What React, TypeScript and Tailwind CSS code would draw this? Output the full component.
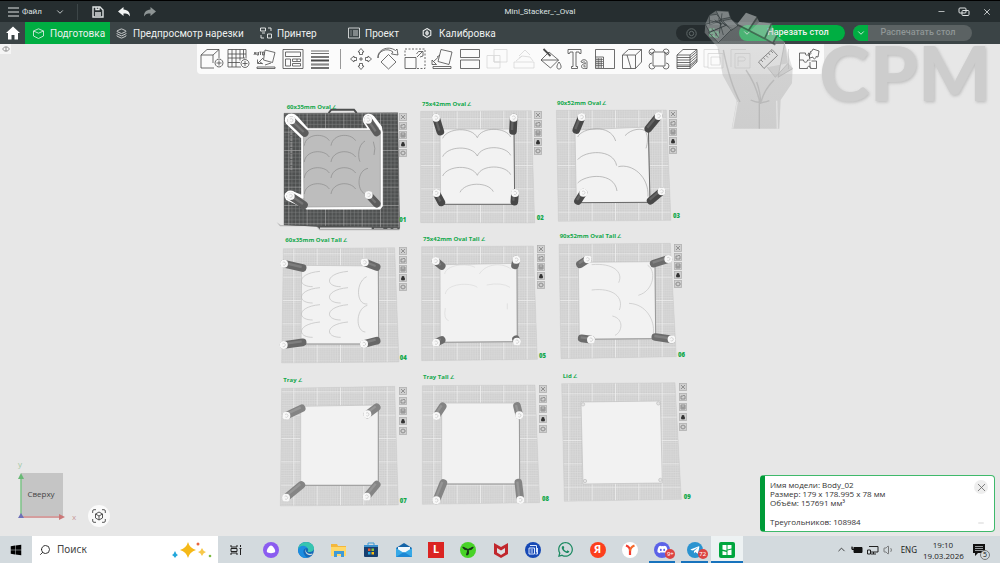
import React from "react";
import type { ReactNode } from "react";
import { ChevronDown, ChevronUp, X, Minus, Layers, Search, Volume1 } from "lucide-react";
import { FaWhatsapp, FaDiscord, FaTelegramPlane, FaWindows } from "react-icons/fa";

type Point = [number, number];

interface Plate {
  id: string;
  name: string;
  left: number;
  top: number;
  view: string;
  label: Point;
  number: Point;
  tools: Point;
  loose?: boolean;
  dark?: boolean;
  bed: string;
  body: string;
  arcs: string[];
  arcColor: string;
  pillars: [Point, Point][];
  pillarFill: string;
}

const plates: Plate[] = [
  {
    id: "01", name: "60x35mm Oval", left: 0, top: 51, view: "0 0 450 420",
    label: [50, 41], number: [388, 382], tools: [129, 18], dark: true,
    bed: "42,55 383,53 389,398 42,390",
    body: "100,106 331,106 331,334 102,336",
    arcs: [
      ...[122, 171, 219, 267].flatMap((y) => [
        `M103,${y + 30} C106,${y - 6} 162,${y - 10} 178,${y + 15}`,
        `M183,${y + 30} C188,${y - 6} 240,${y - 10} 257,${y + 15}`,
      ]),
      "M285,138 C262,150 264,190 270,200", "M294,220 C260,226 260,286 284,296", "M310,140 Q318,160 312,180",
    ],
    arcColor: "#8a8a8a",
    pillars: [[[104, 114], [64, 76]], [[320, 112], [294, 74]], [[102, 330], [62, 303]], [[320, 326], [296, 300]]],
    pillarFill: "#5c5c5c",
  },
  {
    id: "02", name: "75x42mm Oval", left: 140, top: 51, view: "0 0 450 420",
    label: [36, 34], number: [380, 376], tools: [124, 16],
    bed: "32,49 364,47 374,384 32,383",
    body: "90,102 312,102 314,328 92,328",
    arcs: [
      ...[104, 159, 217].flatMap((y) => [
        `M98,${y + 26} C112,${y - 6} 185,${y - 10} 202,${y + 24}`,
        `M202,${y + 24} C215,${y - 10} 288,${y - 8} 302,${y + 22}`,
      ]),
      "M150,292 C165,260 235,260 250,290",
    ],
    arcColor: "#a2a2a2",
    pillars: [[[91, 110], [78, 68]], [[309, 108], [311, 68]], [[94, 322], [79, 294]], [[313, 320], [315, 294]]],
    pillarFill: "#484848",
  },
  {
    id: "03", name: "90x52mm Oval", left: 275, top: 51, view: "0 0 450 420",
    label: [36, 30], number: [384, 370], tools: [124, 15],
    bed: "34,46 364,45 378,376 40,379",
    body: "90,105 310,96 315,322 94,323",
    arcs: [
      "M98,126 C110,98 196,84 212,138", "M98,194 C120,166 205,160 215,212", "M98,264 C122,238 208,230 216,288",
      "M240,122 C260,100 295,98 302,110 C310,125 308,145 303,160", "M220,215 C262,205 312,244 309,305",
    ],
    arcColor: "#a0a0a0",
    pillars: [[[94, 105], [110, 66]], [[310, 101], [341, 63]], [[99, 318], [115, 293]], [[317, 317], [350, 289]]],
    pillarFill: "#484848",
  },
  {
    id: "04", name: "60x35mm Oval Tall", left: 0, top: 186, view: "0 0 450 420",
    label: [46, 37], number: [389, 390], tools: [129, 17],
    bed: "40,56 374,53 387,396 35,399",
    body: "95,106 325,108 326,342 93,342",
    arcs: [
      ...[150, 199, 250, 302].flatMap((y) => [
        `M150,${y - 26} C80,${y - 20} 80,${y + 20} 128,${y + 20}`,
        `M234,${y - 26} C164,${y - 20} 164,${y + 20} 212,${y + 20}`,
      ]),
      "M290,140 C256,156 258,226 292,222", "M292,226 C256,236 256,304 286,306",
    ],
    arcColor: "#bcbcbc",
    pillars: [[[98, 114], [42, 101]], [[320, 111], [284, 97]], [[98, 337], [41, 345]], [[320, 332], [282, 342]]],
    pillarFill: "#686868",
  },
  {
    id: "05", name: "75x42mm Oval Tall", left: 140, top: 186, view: "420 0 450 420",
    label: [459, 32], number: [807, 384], tools: [127, 15],
    bed: "455,50 790,48 802,388 455,392",
    body: "510,104 741,100 742,335 511,337",
    arcs: ["M524,132 C528,104 590,98 615,112", "M628,132 C650,98 700,98 724,118", "M526,192 C530,160 600,156 622,172", "M650,165 Q695,156 720,172", "M526,234 Q520,268 536,272", "M712,220 v18"],
    arcColor: "#dadada",
    pillars: [[[515, 108], [497, 93]], [[735, 106], [739, 89]], [[515, 330], [498, 338]], [[738, 328], [741, 335]]],
    pillarFill: "#6a6a6a",
  },
  {
    id: "06", name: "90x52mm Oval Tall", left: 275, top: 186, view: "0 0 450 420",
    label: [44, 25], number: [399, 380], tools: [129, 14],
    bed: "42,43 376,40 394,380 48,386",
    body: "100,97 330,95 332,326 103,328",
    arcs: [
      "M140,104 C204,98 236,126 221,158", "M140,180 C204,172 238,202 223,240", "M202,258 C238,266 232,306 210,316",
      "M308,106 C334,120 328,182 280,196", "M252,220 C304,222 330,272 325,310",
    ],
    arcColor: "#c2c2c2",
    pillars: [[[105, 103], [128, 88]], [[326, 101], [370, 87]], [[110, 325], [138, 329]], [[331, 321], [380, 328]]],
    pillarFill: "#6c6c6c",
  },
  {
    id: "07", name: "Tray", left: 0, top: 324, view: "0 0 450 420",
    label: [40, 42], number: [389, 405], tools: [129, 19], loose: true,
    bed: "35,61 374,55 385,411 31,414",
    body: "92,115 325,111 325,352 92,352",
    arcs: [], arcColor: "#c8c8c8",
    pillars: [[[95, 121], [49, 143]], [[320, 118], [292, 139]], [[94, 351], [48, 389]], [[320, 350], [290, 386]]],
    pillarFill: "#848484",
  },
  {
    id: "08", name: "Tray Tall", left: 140, top: 324, view: "420 0 450 420",
    label: [459, 34], number: [816, 399], tools: [129, 17], loose: true,
    bed: "457,53 795,51 809,404 457,409",
    body: "515,105 748,105 749,348 515,348",
    arcs: [], arcColor: "#c8c8c8",
    pillars: [[[518, 115], [499, 144]], [[741, 114], [748, 142]], [[520, 345], [499, 397]], [[745, 344], [751, 396]]],
    pillarFill: "#848484",
  },
  {
    id: "09", name: "Lid", left: 275, top: 324, view: "0 414 450 420",
    label: [53, 444], number: [416, 808], tools: [134, 15], loose: true,
    bed: "50,461 390,458 409,808 58,814",
    body: "108,516 346,513 352,759 114,762",
    arcs: [], arcColor: "#c8c8c8", pillars: [], pillarFill: "#848484",
  },
];

function Pillar({ base, cap, fill }: { base: Point; cap: Point; fill: string }) {
  return (
    <g>
      <line x1={base[0]} y1={base[1]} x2={cap[0]} y2={cap[1]} stroke={fill} strokeWidth="23" strokeLinecap="round" />
      <line x1={base[0] - 3} y1={base[1] - 3} x2={cap[0] - 3} y2={cap[1] - 3} stroke="#fff" strokeOpacity=".15" strokeWidth="7" />
      <circle cx={cap[0]} cy={cap[1]} r="12" fill="#f8f8f8" />
      <path d={`M${cap[0] - 4},${cap[1] - 3} a5,5 0 1 1 1,7`} fill="none" stroke="#c2c2c2" strokeWidth="2" />
    </g>
  );
}

const plateTools: { label: string; icon: ReactNode }[] = [
  { label: "Удалить стол", icon: <path d="M2 2l4 4M6 2L2 6" /> },
  { label: "Повернуть модели", icon: <path d="M2 6V3h2l1-1 1 1v3z" /> },
  { label: "Расставить модели", icon: <path d="M2 2h4v4H2zM2 4h4M4 4v2" /> },
  { label: "Заблокировать стол", icon: <path d="M2.500 4h3v2h-3zM3 4V2.500h2V4" fill="#333" stroke="#333" /> },
  { label: "Настройки стола", icon: <path d="M4 2l2 1v2L4 6 2 5V3z" /> },
];

function PlateView({ plate }: { plate: Plate }) {
  const grid = plate.dark ? "url(#grid-dark)" : "url(#grid-light)";
  return (
    <section className="absolute h-[140px] w-[150px]" style={{ left: plate.left, top: plate.top }} aria-label={plate.name}>
      <svg className="block h-full w-full overflow-visible" viewBox={plate.view}>
        {plate.dark && (
          <g>
            <path d="M176,54 l8,-10 h68 l8,10" fill="none" stroke="#4c4e4e" strokeWidth="6" />
            <path d="M20,382 l12,8 h106 l8,10 H388 v6 H148 l-10,-12 H30" fill="#b9b9b9" />
            <path d="M42,389 L389,397 v6 H150 l-8,-8 Z" fill="#545656" />
            <path d="M150,400 h155" stroke="#dadada" strokeWidth="5" />
            <path d="M312,400 h28 M352,400 h10 M370,400 h12" stroke="#e8e8e8" strokeWidth="2" />
          </g>
        )}
        <polygon points={plate.bed} fill={plate.dark ? "#4d4f4f" : "#cbcbcb"} />
        <polygon points={plate.bed} fill={grid} stroke={plate.dark ? "#3f4141" : "#c6c6c6"} strokeWidth="1" />
        {plate.dark && <path d="M64,105 v120" stroke="#999" strokeWidth="6" strokeDasharray="5 2 8 3" opacity=".7" />}
        {plate.dark && (
          <path
            d="M98,128 L52,84 Q44,68 58,61 Q68,57 78,66 L112,104 H300 L284,80 Q280,64 294,61 Q302,60 308,66 L331,96 L334,112 V332 L328,339 H110 L52,312 Q43,300 54,293 Q64,288 74,296 L98,306 Z"
            fill="#bdbdbd" stroke="#fff" strokeWidth="9" strokeLinejoin="round"
          />
        )}
        <polygon points={plate.body} fill={plate.dark ? "#bdbdbd" : "#f2f2f2"} stroke={plate.dark ? "#9b9b9b" : "#c0c0c0"} strokeWidth="2" />
        {!plate.dark && plate.id !== "09" && (
          <polyline points={plate.body.split(" ").slice(1).join(" ")} fill="none" stroke={plate.id < "04" ? "#6a6a6a" : "#9a9a9a"} strokeWidth="3" />
        )}
        {plate.arcs.map((d) => (
          <path key={d} d={d} fill="none" stroke={plate.arcColor} strokeWidth="2" />
        ))}
        {plate.id === "09" &&
          [[114, 523], [340, 520], [120, 753], [346, 750]].map(([x, y]) => (
            <circle key={`${x}-${y}`} cx={x} cy={y} r="5" fill="#e4e4e4" stroke="#bcbcbc" strokeWidth="2" />
          ))}
        {plate.pillars.map(([base, cap]) => (
          <Pillar key={cap.join()} base={base} cap={cap} fill={plate.pillarFill} />
        ))}
        <text x={plate.label[0]} y={plate.label[1]} className="fill-[#12a84b] font-['Open_Sans',sans-serif] text-[18px] font-bold">
          {plate.name}
          <tspan className="text-[16px]" dx="3">∠</tspan>
        </text>
        <text x={plate.number[0]} y={plate.number[1]} className="fill-[#12a84b] font-['Open_Sans',sans-serif] text-[18px] font-extrabold">
          {plate.id}
        </text>
      </svg>
      <div className={`absolute flex flex-col ${plate.loose ? "gap-0.5" : "gap-px"}`} style={{ left: plate.tools[0], top: plate.tools[1] }}>
        {plateTools.map((t) => (
          <button key={t.label} aria-label={t.label} className="block size-2 bg-[#cfcfcf]">
            <svg viewBox="0 0 8 8" className="block size-2" fill="none" stroke="#777" strokeWidth=".7">
              <rect x=".5" y=".5" width="7" height="7" stroke="#b0b0b0" />
              {t.icon}
            </svg>
          </button>
        ))}
      </div>
    </section>
  );
}

interface Tool {
  label: string;
  icon: ReactNode;
  off?: boolean;
}

const addTools: Tool[] = [
  { label: "Добавить модель", icon: <path d="M1 7h12M1 7v13h13M1 7l6-5.500h12L13 7v8M19 1.500V10M19 11a4 4 0 1 0 .01 0M19 12.500v5M16.500 15h5" /> },
  { label: "Добавить стол", icon: <path d="M1 1.500h18v9M1 1.500V19h13M5 1.500V19M9 1.500V19M13 1.500v11M16.500 1.500V10M1 6h18M1 10h17M1 14.500h12M18 11.500a4 4 0 1 0 .01 0M18 13v5M15.500 15.500h5" /> },
  { label: "Автоориентация", icon: <><path d="M11 2l10 2.500-2.500 10-9-2.500zM3 20.500h18v-1.500H3zM9 10l-5 5M3.500 11.500v4h4.500M6 14l3 2M17 15l-6 2" /><path d="M0 7l1-3 1 3M3 4v3h1.500V4M5.500 4h2M6.500 4v3M8.500 4h1.500v3H8.500z" /></> },
  { label: "Расставить", icon: <path d="M1 1.500h20v19H1zM3.500 4h15v4.500h-15zM3.500 11h5v7h-5zM10.500 11h8v2.500h-8zM10.500 15.500h8V18h-8zM15 11v2" /> },
  { label: "Слои", icon: <><path d="M2 3h18M2 5.500h18" /><path d="M2 9h18" strokeWidth="1.500" /><path d="M2 12.500h18" strokeWidth="2" /><path d="M2 16h18M2 17h18M2 19.500h18M2 20.500h18" /></> },
];

const editTools: Tool[] = [
  { label: "Переместить", icon: <path d="M11 .5l3 3.500h-1.500v2.500h-3V4H8zM11 21.500l3-3.500h-1.500v-2.500h-3V18H8zM.5 11L4 8v1.500h2.500v3H4V14zM21.500 11L18 8v1.500h-2.500v3H18V14zM10 10h2v2h-2z" /> },
  { label: "Повернуть", icon: <path d="M11.500 6.500l7.500 7.500-7.500 7L4 14zM1 10C1 3 10-1 16 4l-1.500 2 6.500 1-1-6-1.500 1.500C11-3 0 2 1 10z" /> },
  { label: "Масштаб", icon: <><path d="M1 9.500h11v11H1zM13 9l5-5M14.500 3.500H19V8M14.500 3.500l-2 2.500M19 8l-3 1" /><path d="M1 8V1h20v19.500h-8" strokeDasharray="2 1.500" /></> },
  { label: "Положить на грань", icon: <path d="M10 1.500l11 2.500-3 12.500L7 13.500zM2 18.500h18v2H2zM7.500 9l-5 4.500M1 12v4.500h4.500zM9 7L6 9" /> },
  { label: "Разрезать", icon: <path d="M1.500 1.500h19v8h-19zM1.500 12h19v8.500h-19z" /> },
  { label: "Булевы операции", off: true, icon: <path d="M1 7.500h13v12.500H1zM8 1.500h13V14H8zM8 7.500V14h6" /> },
  { label: "Упростить", off: true, icon: <path d="M1 14h20v6H1zM3 13l6-5 8 1 3 4M6 8l6-6 5 5M9 8l-3 2" /> },
  { label: "Раскраска", icon: <><path d="M9 4l9.500 8-8 8L1 12zM1 12h17.500M19 14c3 4 2.500 7 0 7s-3-3 0-7z" /><path d="M3.500 1l7 7" strokeWidth="1.800" /></> },
  { label: "Текст", icon: <><path d="M1 1.500h13v4h-1.500l-.5-1.500H9v14.500h1.500v2h-6v-2H6V4H3l-.5 1.500H1z" /><path d="M14 14c0-3 6-3 6 0v6.500h-1.500V20c-4 2-6-3-1-4.500h1c0-2-2.500-2-2.500-1zM18.500 17c-2.500 0-2.500 2.500 0 1.500" /></> },
  { label: "Поддержки", icon: <><path d="M1.500 1.500h19v19h-11M1.500 1.500V9h8v11.500h-8V9" /><path d="M3 10v10M4.500 10v10M6 10v10M7.500 10v10M2 11.500h7M2 13.500h7M2 15.500h7M2 17.500h7" strokeWidth=".6" /></> },
  { label: "Шов", icon: <path d="M1.500 7h13v13.500h-13zM1.500 7l6-5.500h13L14.500 7M20.500 1.500V14l-6 6.500M6 7l4 13.500" /> },
  { label: "Уши", icon: <path d="M5 4h12v14H5zM4 7A3 3 0 1 1 7 3.500M18 7a3 3 0 1 0-3-3.500M4 15a3 3 0 1 0 3 3.500M18 15a3 3 0 1 1-3 3.500M2.500 4a1.500 1.500 0 1 0 3 0M16.500 4a1.500 1.500 0 1 0 3 0" /> },
  { label: "Высота слоёв", icon: <path d="M1 7h13v13.500H1zM1 7l6-5.500h14L14 7M21 1.500V14l-7 6.500M1 9.500h13l7-6M1 12h13l7-6M1 14.500h13l7-6M1 17h13l7-6M1 18.500h13l7-6" /> },
  { label: "Сборка", off: true, icon: <path d="M1 1.500h15v4M1 1.500V19h4M5 5.500h15V20H5zM8 9h9v8H8z" /> },
  { label: "Сборка с опорой", off: true, icon: <path d="M1 1.500h15M1 1.500V19M5 5.500h15V20H5zM8 18V9h5c3 0 3 4 0 4H8" /> },
  { label: "Измерить", icon: <path d="M1.500 14L15 1.500l5.500 6L7 20.500zM4 12l2 2M6.500 9.500l1.500 2M9 7.500l2 2M11.500 5l1.500 2M14 3l2 2" /> },
];

const assemblyTools: Tool[] = [
  { label: "Вид сборки", icon: <path d="M1.500 5h6c-1 3 3.500 3 3 0h1v6M1.500 5v15.500h8c-1-3 4-3 3 0h6V13h-5M1.500 12h4c0 3 4 3 4 0h3M12 4l2-1 1-2 6 2-1 6-2-.5c0 3-3 3-3 .500l-3 1-1.500-3c3 0 3-3 1.500-3M12 14v6" /> },
];

function ToolButtons({ tools }: { tools: Tool[] }) {
  return (
    <>
      {tools.map((t) => (
        <button key={t.label} aria-label={t.label} disabled={t.off} className="flex justify-center disabled:opacity-20">
          <svg viewBox="0 0 22 22" className="size-[22px] overflow-visible" fill="none" stroke="#4a4a4a" strokeWidth=".8" strokeLinejoin="round">
            {t.icon}
          </svg>
        </button>
      ))}
    </>
  );
}

function Toolbar() {
  return (
    <div className="relative flex justify-center pl-5">
      <div role="toolbar" aria-label="Инструменты" className="flex h-[30px] items-center rounded-b-sm bg-[#fbfbfb] px-px">
        <div className="grid w-[136px] grid-cols-5"><ToolButtons tools={addTools} /></div>
        <div className="flex w-[14px] justify-center"><span className="h-5 w-px bg-[#999]" /></div>
        <div className="grid w-[434px] grid-cols-16"><ToolButtons tools={editTools} /></div>
        <div className="flex w-[14px] justify-center"><span className="h-5 w-px bg-[#ddd]" /></div>
        <div className="grid w-[27px]"><ToolButtons tools={assemblyTools} /></div>
      </div>
    </div>
  );
}

function TitleBar() {
  return (
    <header className="flex h-[22px] items-center border-t border-black bg-[#262e30] font-['Roboto','Open_Sans',sans-serif] text-[8px] text-[#dfe3e3]">
      <div className="flex flex-1 items-center">
        <button className="ml-2 flex items-center gap-[3px]">
          <svg viewBox="0 0 11 10" className="h-[10px] w-[11px]" stroke="currentColor"><path d="M0 1h11M0 5h11M0 9h11" /></svg>
          Файл
        </button>
        <button aria-label="Ещё" className="ml-[13px]"><ChevronDown size={10} /></button>
        <span className="ml-3 h-4 w-px bg-[#3d4648]" />
        <button aria-label="Сохранить" className="ml-[14px]">
          <svg viewBox="0 0 12 12" className="size-3" fill="none" stroke="currentColor" strokeWidth="1.4"><path d="M1 1h7l3 3v7H1z" /><path d="M3 7h6M3 9h6M4 1v2.500h3V1" /></svg>
        </button>
        <button aria-label="Отменить" className="ml-[14px]">
          <svg viewBox="0 0 12 10" className="h-[10px] w-3" fill="#f1f3f3"><path d="M0 4.500L5.500 0v2.500C10 3 12 5 12 9.500 10.500 7 9 6.500 5.500 6.500V9z" /></svg>
        </button>
        <button aria-label="Повторить" className="ml-[14px]">
          <svg viewBox="0 0 12 10" className="h-[10px] w-3" fill="#8d9494"><path d="M12 4.500L6.500 0v2.500C2 3 0 5 0 9.500 1.500 7 3 6.500 6.500 6.500V9z" /></svg>
        </button>
      </div>
      <h1 className="pl-[88px]">Mini_Stacker_-_Oval</h1>
      <div className="flex flex-1 items-center justify-end gap-3 pr-2">
        <button aria-label="Свернуть"><Minus size={9} /></button>
        <button aria-label="Восстановить">
          <svg viewBox="0 0 12 10" className="h-[10px] w-3" fill="none" stroke="currentColor"><rect x="1" y="1" width="7" height="5" rx="1" /><rect x="4" y="3.500" width="7" height="5" rx="1" /></svg>
        </button>
        <button aria-label="Закрыть"><X size={10} /></button>
      </div>
    </header>
  );
}

function TabBar() {
  return (
    <nav className="flex h-[22px] items-stretch bg-[#3b4446] font-['Roboto','Open_Sans',sans-serif] text-[10px] text-[#eef0f0]">
      <button aria-label="Главная" className="flex w-[25px] items-center justify-center">
        <svg viewBox="0 0 14 14" className="size-[14px]" fill="white"><path d="M7 .5L0 7h2v6.500h3.500V9h3v4.500H12V7h2z" /></svg>
      </button>
      <button className="flex w-[85px] items-center gap-1.5 bg-[#00ae42] pl-2">
        <svg viewBox="0 0 11 11" className="size-[11px]" fill="none" stroke="currentColor" strokeWidth=".8"><path d="M.5 3L5.500.8l5 2.200v5l-5 2.500-5-2.500zM.5 3l5 2.200 5-2.200" /></svg>
        Подготовка
      </button>
      <button className="ml-1.5 flex w-[124px] shrink-0 items-center gap-1.5 whitespace-nowrap">
        <Layers size={11} strokeWidth={1.700} className="shrink-0" />
        Предпросмотр нарезки
      </button>
      <button className="ml-5 flex w-[60px] items-center gap-[5px]">
        <svg viewBox="0 0 12 12" className="size-3" fill="none" stroke="currentColor" strokeWidth=".9"><path d="M.5 1h5v3h-5zM2 6h3M8 1h3v3M7.500 7h4v4h-4zM1 8v3h3" /></svg>
        Принтер
      </button>
      <button className="ml-7 flex w-[60px] items-center gap-[5px]">
        <svg viewBox="0 0 12 12" className="size-3" fill="none" stroke="currentColor" strokeWidth=".8"><path d="M.5 1h11v10H.5zM2.500 4h1M5 4h5M2.500 6h1M5 6h5M2.500 8h1M5 8h5" /></svg>
        Проект
      </button>
      <button className="ml-[14px] flex items-center gap-[7px]">
        <svg viewBox="0 0 10 10" className="size-[10px]" fill="none" stroke="currentColor" strokeWidth="1.100"><path d="M5 .6l3.800 2.200v4.400L5 9.400 1.200 7.200V2.800z" /><circle cx="5" cy="5" r="1.300" /><path d="M5 2.500v5" /></svg>
        Калибровка
      </button>
      <div className="ml-auto flex items-center gap-2 pr-7">
        <div className="flex h-4 items-center rounded-full bg-[#262d2f]">
          <button aria-label="Параметры" className="flex w-[30px] justify-center">
            <svg viewBox="0 0 10 10" className="size-[11px]" fill="none" stroke="#5f6868" strokeWidth=".9"><circle cx="5" cy="5" r="4.300" /><circle cx="5" cy="5" r="2" /></svg>
          </button>
          <button aria-label="Все столы" className="flex w-[15px] justify-center">
            <svg viewBox="0 0 10 10" className="size-[10px]" fill="none" stroke="#3ec871" strokeWidth="1.200"><path d="M1 1h4v7H1zM5 4h4v5H5zM3 3v3" /></svg>
          </button>
          <div className="ml-[18px] flex h-4 w-[106px] items-center rounded-full bg-[#00ae42]">
            <button aria-label="Режим нарезки" className="flex w-4 justify-center"><ChevronDown size={10} /></button>
            <button className="flex-1 whitespace-nowrap pr-1 text-[9px] font-medium">Нарезать стол</button>
          </div>
        </div>
        <div className="flex h-4 w-[119px] items-center overflow-hidden rounded-full bg-[#5b6263]">
          <button aria-label="Режим печати" className="flex h-4 w-[15px] items-center justify-center bg-[#00ae42]"><ChevronDown size={10} /></button>
          <button disabled className="flex-1 whitespace-nowrap pr-1 text-[9px] font-medium text-[#8f9696]">Распечатать стол</button>
        </div>
      </div>
    </nav>
  );
}

function Watermark() {
  return (
    <svg viewBox="0 0 1020 420" className="pointer-events-none absolute right-0 top-0 h-[140px] w-[340px]" aria-hidden="true">
      <defs>
        <linearGradient id="fist" x1="0" y1="0" x2="0" y2="1">
          <stop offset="0" stopColor="#b0b6b6" stopOpacity=".45" />
          <stop offset=".25" stopColor="#b8bcbc" stopOpacity=".4" />
          <stop offset=".35" stopColor="#b4b4b4" stopOpacity=".4" />
          <stop offset="1" stopColor="#b4b4b4" stopOpacity=".5" />
        </linearGradient>
        <filter id="soft"><feDropShadow dx="3" dy="4" stdDeviation="4" floodColor="#888" floodOpacity=".45" /></filter>
      </defs>
      <path d="M168,32 L205,34 L213,58 L232,72 L258,38 L290,50 L298,66 L334,70 L348,106 L374,126 L384,190 L398,204 L396,250 L362,300 L358,386 L215,386 L230,302 L188,226 L172,140 L134,98 L136,72 L148,46 Z" fill="url(#fist)" />
      <g fill="#c5c9c9" fillOpacity=".25" stroke="#2c3436" strokeOpacity=".6" strokeWidth="3">
        <path d="M168,32 l38,2 5,18 -30,6 z" />
        <path d="M148,46 l22,-3 14,18 -35,14 z" />
        <path d="M136,73 l45,-12 16,16 -48,20 z" />
        <path d="M146,98 l52,-22 19,10 -42,42 z" />
        <path d="M188,62 l26,-5 20,20 -20,14 z" />
        <path d="M164,60 l22,14 M176,55 l14,50 M156,85 l20,28 M150,62 l50,12 M186,40 l-8,60" fill="none" />
      </g>
      <g fill="#d5d9d9" fillOpacity=".25">
        <path d="M258,38 l32,12 -24,38 -34,-17 z" />
        <path d="M298,66 l36,5 -22,46 -42,-24 z" />
        <path d="M334,84 l16,24 -12,24 -25,-14 z" />
      </g>
      <path d="M232,74 L264,90 L318,118 L346,134 M292,52 L266,90 M334,72 L314,116 M350,108 L338,130" fill="none" stroke="#26302c" strokeOpacity=".55" strokeWidth="5" />
      <path d="M384,190 L346,232 L322,202 M374,128 L354,232 L398,206" fill="#aaa" fillOpacity=".3" stroke="#b0b0b0" strokeWidth="2" />
      <path d="M190,150 Q210,250 240,306 M258,210 Q286,250 298,300 V386 M342,240 Q312,270 304,304 M272,300 Q300,314 328,302 M290,246 Q302,280 302,312" fill="none" stroke="#a4a4a4" strokeOpacity=".5" strokeWidth="4" />
      <path d="M232,306 L218,386 M350,302 L352,386" stroke="#e2e2e2" strokeWidth="4" />
      <text x="478" y="304" className="fill-[#cdcdcd] font-['Lato',sans-serif] text-[230px] font-black" filter="url(#soft)">CPM</text>
    </svg>
  );
}

function ViewCube() {
  return (
    <div className="absolute bottom-2 left-3 flex items-end gap-2">
      <svg viewBox="0 0 68 68" className="h-[68px] w-[68px] overflow-visible">
        <rect x="9" y="13" width="42" height="43" fill="#c5c5c5" />
        <path d="M9 56V18" stroke="#7dc387" strokeWidth="1.500" />
        <path d="M6 19l3-6 3 6z" fill="#68b975" />
        <path d="M9 57h40" stroke="#ce8585" strokeWidth="1.500" />
        <path d="M47 54l6 3-6 3z" fill="#cb7777" />
        <path d="M6 58l3-5 3 5z" fill="#6e70b8" />
        <text x="29" y="37" textAnchor="middle" fill="#444" fontSize="8">Сверху</text>
        <text x="6" y="7" fill="#a2c8a5" fontSize="8">y</text>
        <text x="60" y="60" fill="#c79b9b" fontSize="8">x</text>
      </svg>
      <button aria-label="Показать всё" className="mb-px flex size-[22px] items-center justify-center rounded-full bg-[#fafafa]">
        <svg viewBox="0 0 14 14" className="size-[14px]" fill="none" stroke="#444" strokeWidth=".9"><path d="M.7 4V2A1.300 1.300 0 0 1 2 .7h2M10 .7h2A1.300 1.300 0 0 1 13.300 2v2M13.300 10v2a1.300 1.300 0 0 1-1.300 1.300h-2M4 13.300H2A1.300 1.300 0 0 1 .7 12v-2M7 3l3.500 2v4L7 11 3.500 9V5zM3.500 5L7 7l3.500-2M7 7v4" /></svg>
      </button>
    </div>
  );
}

function ModelInfo() {
  return (
    <aside className="absolute bottom-1 right-[5px] flex h-[57px] w-[235px] justify-between rounded-sm border border-l-[5px] border-[#3fb96b] border-l-[#009b38] bg-white py-1 pl-[5px] pr-1.5 text-[8px] leading-[9px] text-[#333]">
      <div>
        <p>Имя модели: Body_02</p>
        <p>Размер: 179 x 178.995 x 78 мм</p>
        <p>Объём: 157691 мм³</p>
        <p className="mt-[10px]">Треугольников: 108984</p>
      </div>
      <div className="flex flex-col items-center justify-between">
        <button aria-label="Закрыть сообщение" className="flex size-[14px] items-center justify-center rounded-full bg-[#eee] text-[#666]"><X size={13} strokeWidth={1.500} /></button>
        <button aria-label="Свернуть сообщение" className="text-[#aaa]"><Minus size={8} strokeWidth={1.500} /></button>
      </div>
    </aside>
  );
}

function Scene() {
  return (
    <main className="relative min-h-[492px] flex-1 overflow-hidden bg-[#e7e7e7]">
      <svg className="absolute size-0" aria-hidden="true">
        <defs>
          <pattern id="grid-light" width="70" height="70" patternUnits="userSpaceOnUse">
            <path d="M7 0V70M14 0V70M21 0V70M28 0V70M35 0V70M42 0V70M49 0V70M56 0V70M63 0V70M0 7H70M0 14H70M0 21H70M0 28H70M0 35H70M0 42H70M0 49H70M0 56H70M0 63H70" stroke="#dedede" strokeWidth="2" />
            <path d="M0 1H70M1 0V70" stroke="#efefef" strokeWidth="3" />
          </pattern>
          <pattern id="grid-dark" width="55" height="55" patternUnits="userSpaceOnUse">
            <path d="M11 0V55M22 0V55M33 0V55M44 0V55M0 11H55M0 22H55M0 33H55M0 44H55" stroke="#808282" strokeWidth="1.500" />
            <path d="M0 1H55M1 0V55" stroke="#b0b2b2" strokeWidth="2" />
          </pattern>
        </defs>
      </svg>
      <div className="absolute left-[27%] top-0">
        {plates.map((p) => (
          <PlateView key={p.id} plate={p} />
        ))}
      </div>
      <Toolbar />
      <button aria-label="Показать панель" className="absolute left-0 top-0 flex h-[10px] w-[11px] items-center justify-center bg-[#f5f5f5]">
        <svg viewBox="0 0 8 6" className="h-[6px] w-2" fill="none" stroke="#777" strokeWidth=".8"><path d="M.5 3Q4-1.500 7.500 3 4 7.500.5 3zM4 1v4" /></svg>
      </button>
      <ViewCube />
      <ModelInfo />
    </main>
  );
}

const apps: { name: string; icon: ReactNode; state?: "open" | "active" }[] = [
  { name: "Проводник", icon: <svg viewBox="0 0 16 14" className="h-[14px] w-4"><path d="M0 1h6l1 2h8v10H0z" fill="#f4b73b" /><path d="M0 4h15v9H0z" fill="#ffd868" /><path d="M3 8h10v6h-3v-3H6v3H3z" fill="#3f9ad6" /></svg> },
  { name: "Магазин", icon: <svg viewBox="0 0 16 16" className="size-4"><path d="M5 3V1h6v2" fill="none" stroke="#3c9bd6" /><path d="M1 3h14v11q0 1-1 1H2q-1 0-1-1z" fill="#173f6f" /><path d="M1 3h14v2H1z" fill="#3b91cf" /><path d="M5 6.500h2.500V9H5z" fill="#f0542d" /><path d="M8.500 6.500H11V9H8.500z" fill="#8cc63e" /><path d="M5 10h2.500v2.500H5z" fill="#29abe2" /><path d="M8.500 10H11v2.500H8.500z" fill="#fdbd10" /></svg> },
  { name: "Почта", icon: <svg viewBox="0 0 16 14" className="h-[14px] w-4"><path d="M0 5l8-5 8 5v9H0z" fill="#1464a8" /><path d="M2 4h12v7H2z" fill="#f2f8fc" /><path d="M0 5l8 5 8-5v9H0z" fill="#36a8e6" /><path d="M0 14l8-5 8 5z" fill="#1c87d4" /></svg> },
  { name: "L", icon: <span className="flex size-4 items-center justify-center bg-[#db2422] text-[11px] font-bold text-white">L</span> },
  { name: "Вентилятор", icon: <svg viewBox="0 0 16 16" className="size-4"><circle cx="8" cy="8" r="8" fill="#48d327" /><path d="M8 7.500L2.800 5q1 3.500 5.200 2.500L13.200 5q-1 3.500-5.200 2.500L6.500 13q3 .500 1.500-5.500z" fill="#18331a" stroke="#18331a" /></svg> },
  { name: "McAfee", icon: <svg viewBox="0 0 16 16" className="size-4"><path d="M1 1l7 4 7-4v11l-7 4-7-4z" fill="#c1272d" /><path d="M4 6l4 2.500L12 6v4.500L8 13l-4-2.500z" fill="#dcdfe2" /></svg> },
  { name: "Служба", icon: <svg viewBox="0 0 16 16" className="size-4"><circle cx="8" cy="8" r="8" fill="#1749b5" /><path d="M5 3.500h6.500v7M4 6h5.500v6H4zM5.500 8h2.500M5.500 10h2.500M12.500 6v6h-2" fill="none" stroke="#dce8ff" /></svg> },
  { name: "WhatsApp", icon: <FaWhatsapp size={17} color="#1c8a62" /> },
  { name: "Яндекс", icon: <span className="flex size-4 items-center justify-center rounded-full bg-[#fc3f1d] text-[11px] font-bold text-white">Я</span> },
  { name: "Яндекс Браузер", icon: <svg viewBox="0 0 16 16" className="size-4"><circle cx="8" cy="8" r="8" fill="#fff" /><path d="M4 3.500Q8 5 8 8.500V13" fill="none" stroke="#f33b2f" strokeWidth="2.200" /><path d="M12.500 3.500Q8.500 5 8 9" fill="none" stroke="#f5692c" strokeWidth="2.200" /></svg> },
  { name: "Discord", state: "open", icon: <><span className="flex size-4 items-center justify-center rounded-full bg-[#5b62e8]"><FaDiscord size={11} color="white" /></span><Badge text="9+" /></> },
  { name: "Telegram", state: "open", icon: <><span className="flex size-4 items-center justify-center rounded-full bg-[#2a93d0]"><FaTelegramPlane size={10} color="white" /></span><Badge text="72" /></> },
  { name: "Bambu Studio", state: "active", icon: <svg viewBox="0 0 16 16" className="size-4"><rect width="16" height="16" rx="2" fill="#00a63e" /><path d="M3.500 3h4v5.500l-4-1zM8.500 3h4v3.500l-4 1zM3.500 9l4 1v3h-4zM8.500 8.500l4-1V13h-4z" fill="#fff" /></svg> },
];

function Badge({ text }: { text: string }) {
  return <span className="absolute bottom-1 right-[3px] flex size-[10px] items-center justify-center rounded-full bg-[#dc4444] text-[6px] text-white">{text}</span>;
}

function Taskbar() {
  return (
    <footer className="flex h-[27px] items-stretch bg-[#d3dade] font-['Noto_Sans',sans-serif] text-[#222]">
      <button aria-label="Пуск" className="flex w-8 items-center justify-center"><FaWindows size={12} color="black" /></button>
      <label className="flex w-[186px] items-center bg-white pl-[7px]">
        <Search size={12} strokeWidth={1.800} className="-scale-x-100" />
        <input aria-label="Поиск" placeholder="Поиск" className="ml-1.5 w-[114px] text-[10px] outline-none placeholder:text-[#444]" />
        <svg viewBox="0 0 42 18" className="h-[18px] w-[42px]">
          <path d="M17 1q1.500 6 8 8-6.500 2-8 8-1.500-6-8-8 6.500-2 8-8z" fill="#f5b918" />
          <path d="M31 7q1 3 4 4-3 1-4 4-1-3-4-4 3-1 4-4z" fill="#f7c84a" />
          <path d="M4 10q1 3 3 4-2 1-3 3-1-2-3-3 2-1 3-4z" fill="#22a7dc" />
          <circle cx="27" cy="3" r="1.500" fill="#e9663f" /><circle cx="39" cy="15" r="1.300" fill="#7dbb42" />
        </svg>
      </label>
      <div className="grid w-[105px] grid-cols-3">
        <button aria-label="Просмотр задач" className="flex items-center justify-center">
          <svg viewBox="0 0 12 12" className="size-3" fill="none" stroke="#222"><path d="M1 1v2h6V1M1 11V9h6v2M1 4.500h6v3H1zM10.500 1v2M10.500 5v6M9.500 4.500h2" /></svg>
        </button>
        <button aria-label="Алиса" className="flex items-center justify-center">
          <svg viewBox="0 0 16 16" className="size-4"><circle cx="8" cy="8" r="8" fill="#8b5cf0" /><path d="M8 3.500c2 0 5 5 4 6.500s-7 1.500-8 0 2-6.500 4-6.500z" fill="#fff" /></svg>
        </button>
        <button aria-label="Microsoft Edge" className="flex items-center justify-center">
          <svg viewBox="0 0 16 16" className="size-4">
            <circle cx="8" cy="8" r="8" fill="#1469b8" />
            <path d="M0 8C0 3 4 0 8 0c5 0 8 3 8 6.500 0 3-4 4.500-6.500 3 1.500-1.500.500-4-2-4C4 5.500 1 6 0 8z" fill="#36c5b0" />
            <path d="M0 8C1 3 8 2.500 9.500 6.500 6 5.500 4.500 9 6 12q1 2.500 3.500 3.700C4 17 0 12.500 0 8z" fill="#1c8de0" />
            <path d="M8 7c-1 3 2 6 6.500 4.500l-1 1.500C9 14 6 10 8 7z" fill="#d3dade" />
          </svg>
        </button>
      </div>
      <div className="grid w-[420px] grid-cols-13">
        {apps.map((a) => (
          <button key={a.name} aria-label={a.name} className={`relative flex items-center justify-center ${a.state === "active" ? "bg-[#edf2f3]" : ""}`}>
            {a.icon}
            {a.state && <span className={`absolute bottom-0 h-0.5 bg-[#1773bd] ${a.state === "active" ? "inset-x-0" : "inset-x-[3px]"}`} />}
          </button>
        ))}
      </div>
      <div className="ml-auto flex items-center text-[8px] leading-[11px]">
        <ChevronUp size={11} strokeWidth={1.800} />
        <svg viewBox="0 0 12 10" className="ml-1 h-[10px] w-3"><path d="M3 2.500h8v5H3z" fill="#111" stroke="#111" /><path d="M1 1.500v3h2M.5 3h2" stroke="#111" fill="none" /></svg>
        <svg viewBox="0 0 12 10" className="ml-1 h-[10px] w-3" fill="none" stroke="#222"><path d="M2 1.500h9v5.500H4M6.500 7v2M4 9h5M.5 5v4h3V5z" /></svg>
        <Volume1 size={12} strokeWidth={1.500} className="ml-1 text-[#555]" />
        <span className="ml-1.5">ENG</span>
        <time className="ml-1.5 w-10 text-center font-['Open_Sans',sans-serif]">19:10<br />19.03.2026</time>
        <button aria-label="Уведомления" className="relative ml-[10px] mr-[15px] h-[14px] w-3">
          <svg viewBox="0 0 12 12" className="size-3"><path d="M0 0h12v9H5l-3 3V9H0z" fill="#111" /><path d="M2 2.500h8M2 4.500h8M2 6.500h8" stroke="#d3dade" strokeWidth=".7" /></svg>
          <span className="absolute -bottom-[3px] -right-[5px] flex size-[10px] items-center justify-center rounded-full border border-[#777] bg-[#d3dade] text-[7px]">5</span>
        </button>
      </div>
    </footer>
  );
}

export default function App() {
  return (
    <div className="relative flex min-h-screen flex-col font-['Open_Sans','Noto_Sans',sans-serif]">
      <TitleBar />
      <TabBar />
      <Scene />
      <Taskbar />
      <Watermark />
    </div>
  );
}
